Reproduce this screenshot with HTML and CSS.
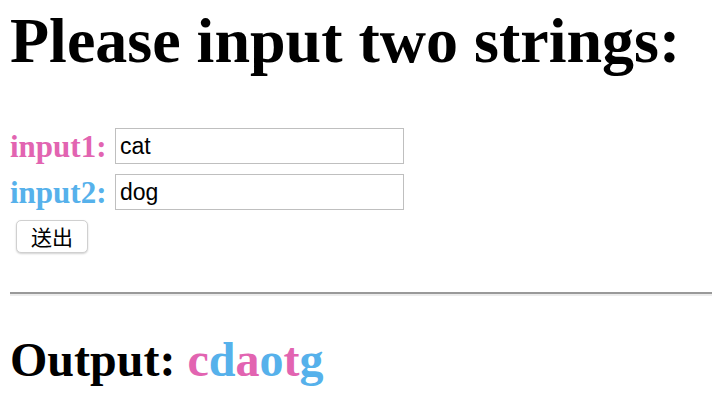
FILE: index.html
```html
<!DOCTYPE html>
<html>
<head>
<meta charset="utf-8">
<title>Strings</title>
<link rel="stylesheet" href="styles.css">
</head>
<body>
<h1 class="title">Please input two strings:</h1>
<form class="form">
  <div class="row">
    <label class="label pink" for="in1">input1:</label>
    <input class="field" id="in1" type="text" value="cat">
  </div>
  <div class="row">
    <label class="label blue" for="in2">input2:</label>
    <input class="field" id="in2" type="text" value="dog">
  </div>
  <button class="submit" type="button">送出</button>
</form>
<hr class="rule">
<h2 class="output">Output: <span class="pink">c</span><span class="blue">d</span><span class="pink">a</span><span class="blue">o</span><span class="pink">t</span><span class="blue">g</span></h2>
</body>
</html>
```
FILE: styles.css
```css
html, body {
  background: #ffffff;
}
body {
  margin: 0;
  padding: 0 0 0 10px;
  font-family: "Liberation Serif", "Times New Roman", serif;
  color: #000;
  overflow: hidden;
}
.title {
  margin: 5px 0 0;
  font-size: 64px;
  line-height: 71px;
  font-weight: bold;
  white-space: nowrap;
}
.form {
  display: flex;
  flex-direction: column;
  align-items: flex-start;
  gap: 10px;
  margin-top: 52px;
}
.row {
  display: flex;
  align-items: center;
  height: 36px;
}
.label {
  width: 105px;
  font-size: 31px;
  line-height: 33px;
  font-weight: bold;
}
.pink { color: #e264b1; }
.blue { color: #56b1eb; }
.field {
  box-sizing: border-box;
  width: 289px;
  height: 36px;
  margin: 0;
  padding: 0 4px;
  border: 1px solid #bfbfbf;
  border-radius: 0;
  font-family: "Liberation Sans", Arial, sans-serif;
  font-size: 23px;
  color: #000;
  background: #fff;
  outline: none;
}
.submit {
  box-sizing: border-box;
  width: 72px;
  height: 33px;
  margin: 0 0 0 6px;
  padding: 0;
  border: 1px solid #d0d0d0;
  border-radius: 5px;
  background: #fff;
  box-shadow: 0 1px 2px rgba(0, 0, 0, 0.18);
  font-family: "Noto Sans CJK SC", "Noto Sans CJK TC", sans-serif;
  font-size: 21px;
  line-height: 1;
  color: #000;
}
.rule {
  height: 0;
  margin: 39px -10px 0 0;
  border: 0;
  border-top: 2px solid #999999;
  border-bottom: 2px solid #ececec;
}
.output {
  margin: 37px 0 0;
  font-size: 48px;
  line-height: 53px;
  font-weight: bold;
}
```
